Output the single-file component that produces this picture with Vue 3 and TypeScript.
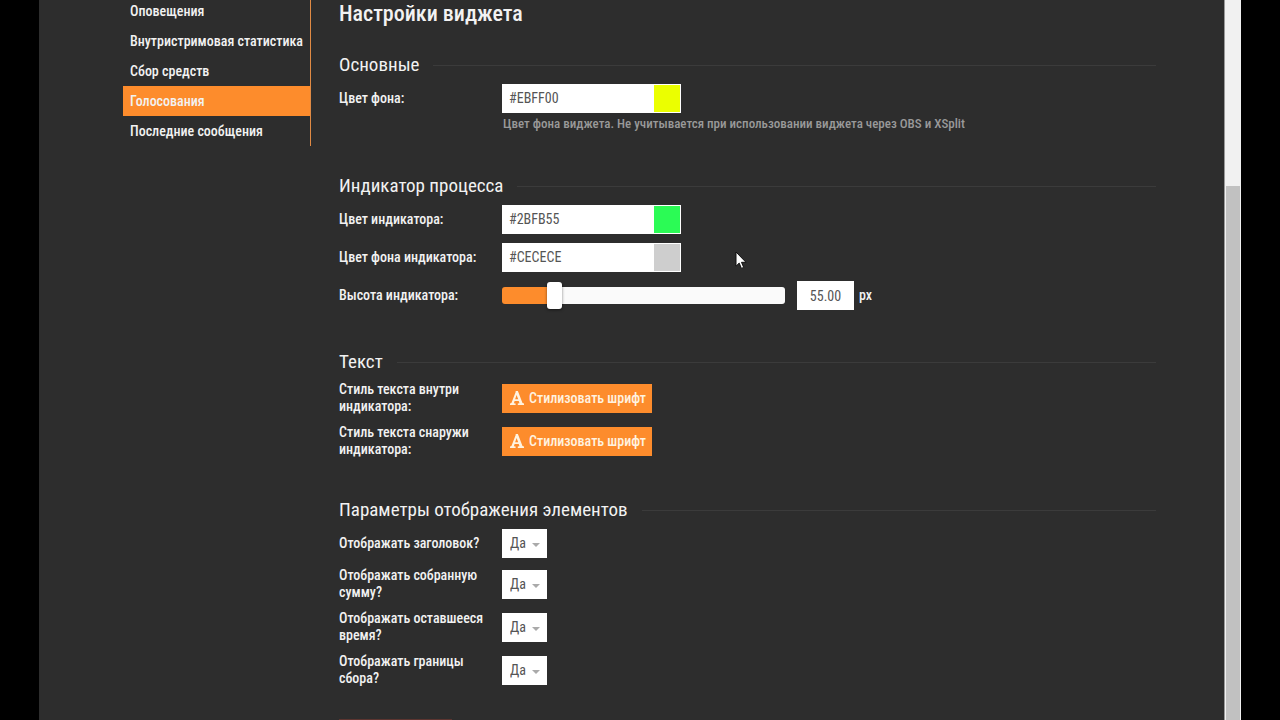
<script setup lang="ts">
import { computed, reactive, ref } from 'vue'

interface NavItem {
  label: string
  active?: boolean
}

const nav: NavItem[] = [
  { label: 'Оповещения' },
  { label: 'Внутристримовая статистика' },
  { label: 'Сбор средств' },
  { label: 'Голосования', active: true },
  { label: 'Последние сообщения' },
]

const background = ref('#EBFF00')
const indicatorColors = reactive([
  { id: 'bar-color', label: 'Цвет индикатора:', value: '#2BFB55' },
  { id: 'bar-back', label: 'Цвет фона индикатора:', value: '#CECECE' },
])

const textStyles = [
  { id: 'text-inside', label: 'Стиль текста внутри индикатора:' },
  { id: 'text-outside', label: 'Стиль текста снаружи индикатора:' },
]

const toggles = reactive([
  { id: 'show-title', label: 'Отображать заголовок?', value: 'Да' },
  { id: 'show-sum', label: 'Отображать собранную сумму?', value: 'Да' },
  { id: 'show-time', label: 'Отображать оставшееся время?', value: 'Да' },
  { id: 'show-limits', label: 'Отображать границы сбора?', value: 'Да' },
])

const MIN = 10
const MAX = 280
const height = ref(55)
const heightText = computed(() => Number(height.value).toFixed(2))
const fill = computed(() => ((height.value - MIN) / (MAX - MIN)) * 100 + '%')
</script>

<template>
  <div class="stage">
    <div class="page">
      <nav class="side">
        <a
          v-for="item in nav"
          :key="item.label"
          href="#"
          class="side-link"
          :class="{ active: item.active }"
          >{{ item.label }}</a
        >
      </nav>

      <main class="main">
        <h1 class="title">Настройки виджета</h1>

        <section class="section">
          <h2 class="head">Основные</h2>
          <div class="row">
            <label class="label" for="bg-color">Цвет фона:</label>
            <span class="color">
              <input id="bg-color" v-model="background" class="color-text" type="text" />
              <span class="swatch" :style="{ background: background }"></span>
            </span>
          </div>
          <p class="hint">
            Цвет фона виджета. Не учитывается при использовании виджета через OBS и XSplit
          </p>
        </section>

        <section class="section">
          <h2 class="head">Индикатор процесса</h2>
          <div v-for="c in indicatorColors" :key="c.id" class="row">
            <label class="label" :for="c.id">{{ c.label }}</label>
            <span class="color">
              <input :id="c.id" v-model="c.value" class="color-text" type="text" />
              <span class="swatch" :style="{ background: c.value }"></span>
            </span>
          </div>
          <div class="row">
            <label class="label" for="bar-height">Высота индикатора:</label>
            <span class="range">
              <input
                id="bar-height"
                v-model.number="height"
                class="slider"
                type="range"
                :min="MIN"
                :max="MAX"
                :style="{ '--fill': fill }"
              />
              <input
                id="bar-height-value"
                class="number"
                type="text"
                aria-labelledby="bar-height-unit"
                :value="heightText"
              />
              <label id="bar-height-unit" class="unit" for="bar-height-value">px</label>
            </span>
          </div>
        </section>

        <section class="section">
          <h2 class="head">Текст</h2>
          <div v-for="t in textStyles" :key="t.id" class="row">
            <label class="label" :for="t.id">{{ t.label }}</label>
            <button :id="t.id" class="style-button" type="button">
              <svg class="font-icon" viewBox="0 0 14 14" aria-hidden="true">
                <path
                  fill="currentColor"
                  fill-rule="evenodd"
                  d="M5.7 0h2.2l4.6 12 1.5.6V14H7.8v-1.4l1.7-.4-.8-2.3H4.6l-.7 2.3 1.7.4V14H0v-1.4l1.4-.6L5.6 1.2zM6.6 3.9 5.1 8.3h3.1z"
                />
              </svg>
              <span>Стилизовать шрифт</span>
            </button>
          </div>
        </section>

        <section class="section">
          <h2 class="head">Параметры отображения элементов</h2>
          <div v-for="t in toggles" :key="t.id" class="row">
            <label class="label" :for="t.id">{{ t.label }}</label>
            <span class="select-box">
              <select :id="t.id" v-model="t.value" class="select">
                <option>Да</option>
              </select>
              <span class="caret"></span>
            </span>
          </div>
        </section>
        <div class="footer-edge"></div>
      </main>
    </div>
    <div class="scrollbar"><div class="thumb"></div></div>

    <svg class="cursor" viewBox="0 0 12 19" aria-hidden="true">
      <path
        d="M1 1v14.2l3.2-3.1 2.2 5.3 2.3-1-2.2-5.1H11z"
        fill="#fff"
        stroke="#111"
        stroke-width="1"
      />
    </svg>
  </div>
</template>

<style>
body {
  margin: 0;
  background: #000;
}
</style>

<style scoped>
* {
  box-sizing: border-box;
}
.stage {
  position: relative;
  display: flex;
  height: 100vh;
  padding: 0 39px;
  overflow: hidden;
  background: #000;
  color: #f2f2f2;
  font-family: 'Roboto Condensed', 'Liberation Sans Narrow', Roboto, sans-serif;
  font-size: 14px;
  line-height: 17px;
}
.stage input,
.stage select,
.stage button {
  margin: 0;
  border: 0;
  border-radius: 0;
  font: inherit;
}
.page {
  flex: 1;
  display: flex;
  align-items: flex-start;
  gap: 28px;
  padding: 0 68px 0 84px;
  background: #2d2d2d;
}
.side {
  flex: none;
  width: 188px;
  margin-top: -4px;
  border-right: 1px solid #e08a44;
}
.side-link {
  display: block;
  padding-left: 7px;
  color: #f2f2f2;
  font-weight: 500;
  line-height: 30px;
  text-decoration: none;
  white-space: nowrap;
}
.side-link.active {
  background: #fd8c2c;
}
.main {
  flex: 1;
  min-width: 0;
}
.title {
  margin: 0 0 26px;
  font-size: 22px;
  font-weight: 500;
  line-height: 28px;
}
.section {
  margin-bottom: 41px;
}
.head {
  display: flex;
  align-items: center;
  gap: 14px;
  margin: 0 0 8px;
  font-size: 19px;
  font-weight: 400;
  line-height: 22px;
}
.head::after {
  content: '';
  flex: 1;
  height: 1px;
  background: #3b3b3b;
}
.row {
  display: grid;
  grid-template-columns: 147px 1fr;
  column-gap: 16px;
  align-items: center;
  justify-items: start;
}
.row + .row {
  margin-top: 9px;
}
.label,
.unit {
  font-weight: 500;
}
.color {
  display: flex;
  width: 179px;
  height: 29px;
  padding: 1px;
  background: #fff;
}
.color-text {
  flex: 1;
  min-width: 0;
  padding: 0 6px;
  background: #fff;
  color: #555;
}
.swatch {
  width: 26px;
}
.hint {
  margin: 0 0 0 164px;
  color: #999;
  font-size: 13px;
  font-weight: 500;
  line-height: 21px;
}
.range {
  display: flex;
  align-items: center;
}
.slider {
  appearance: none;
  width: 283px;
  height: 17px;
  background: linear-gradient(to right, #fd8c2c var(--fill), #fafafa var(--fill));
}
.slider::-webkit-slider-thumb {
  appearance: none;
  width: 15px;
  height: 27px;
  border-radius: 3px;
  background: #fff;
  box-shadow: 0 1px 3px rgba(0, 0, 0, 0.5);
}
.stage .slider {
  border-radius: 3px;
}
.stage .number {
  width: 57px;
  height: 29px;
  margin: 0 5px 0 12px;
  padding: 0;
  background: #fff;
  color: #555;
  text-align: center;
}
.style-button {
  display: flex;
  align-items: center;
  gap: 5px;
  height: 29px;
  padding: 0 6px 0 8px;
  background: #fd8c2c;
  color: #fff3e0;
  white-space: nowrap;
}
.stage .style-button {
  font-weight: 500;
}
.font-icon {
  width: 14px;
  height: 14px;
}
.select-box {
  position: relative;
  display: flex;
}
.select {
  appearance: none;
  width: 45px;
  height: 29px;
  padding: 0 8px;
  background: #fff;
  color: #555;
}
.caret {
  position: absolute;
  top: 14px;
  right: 7px;
  border: 4px solid transparent;
  border-top-color: #aaa;
  border-bottom: 0;
  pointer-events: none;
}
.footer-edge {
  width: 113px;
  height: 29px;
  margin-top: -9px;
  background: #5d3530;
}
.scrollbar {
  display: flex;
  width: 17px;
  padding: 186px 1px 0;
  border-left: 1px solid #999;
  background: #f1f1f1;
}
.thumb {
  flex: 1;
  background: #c1c1c1;
}
.cursor {
  position: absolute;
  top: 251px;
  left: 735px;
  width: 12px;
  height: 19px;
}
</style>
